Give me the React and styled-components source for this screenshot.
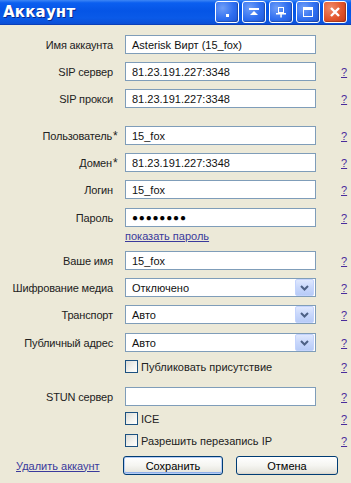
import React from 'react';
import styled, { createGlobalStyle } from 'styled-components';

const GlobalStyle = createGlobalStyle`
  html, body {
    margin: 0;
    padding: 0;
    background: #ece9d8;
  }
  body {
    font-family: Tahoma, "Liberation Sans", "DejaVu Sans", sans-serif;
    font-size: 11px;
    color: #222;
  }
`;

const Window = styled.div`
  width: 351px;
  height: 483px;
  background: #ece9d8;
  overflow: hidden;
`;

const TitleBar = styled.div`
  height: 24px;
  display: flex;
  align-items: center;
  justify-content: space-between;
  padding: 0 4px 0 3px;
  background: linear-gradient(180deg, #3d86f5 0%, #0b5ff0 12%, #0555e6 45%, #0a5ae8 75%, #0b4fd6 100%);
  border-bottom: 1px solid #0b3fb8;
`;

const Title = styled.div`
  color: #fff;
  font-family: "DejaVu Sans", "Liberation Sans", sans-serif;
  font-weight: bold;
  font-size: 15px;
  letter-spacing: 0.2px;
  text-shadow: 1px 1px 0 #0a2a8c;
`;

const Controls = styled.div`
  display: flex;
  gap: 3px;
`;

const CtrlButton = styled.div`
  width: 22px;
  height: 20px;
  border: 1px solid #fff;
  border-radius: 3px;
  display: flex;
  align-items: center;
  justify-content: center;
  background: ${(p) =>
    p.$close
      ? 'radial-gradient(circle at 30% 30%, #f08a6a 0%, #e2552c 55%, #c8391a 100%)'
      : 'radial-gradient(circle at 30% 30%, #6f9ef8 0%, #2f6ef0 55%, #1f57d8 100%)'};
  box-shadow: inset -1px -1px 1px rgba(0, 0, 0, 0.25);
`;

const Form = styled.div`
  padding-top: 10px;
`;

const Row = styled.div`
  display: grid;
  grid-template-columns: 113px 191px 1fr;
  column-gap: 12px;
  align-items: center;
  height: ${(p) => p.$h || 19}px;
  margin-top: ${(p) => p.$mt || 0}px;
`;

const Label = styled.div`
  text-align: right;
  white-space: nowrap;
  letter-spacing: -0.15px;
`;

const Star = styled.span`
  display: inline-block;
  width: 0;
  overflow: visible;
  margin-left: 1px;
  font-size: 12px;
`;

const Input = styled.div`
  box-sizing: border-box;
  height: 19px;
  border: 1px solid #7f9db9;
  background: #fff;
  padding: 0 6px;
  display: flex;
  align-items: center;
  font-size: 11px;
  color: #111;
  white-space: nowrap;
`;

const Dots = styled.span`
  font-size: 10px;
  letter-spacing: 0.8px;
  color: #000;
`;

const SelectBox = styled(Input)`
  padding-right: 1px;
  justify-content: space-between;
`;

const DropBtn = styled.div`
  width: 17px;
  height: 15px;
  border: 1px solid #c3d3fd;
  border-radius: 2px;
  background: linear-gradient(180deg, #dfe8fe 0%, #c8d7fb 50%, #b7cbf7 100%);
  display: flex;
  align-items: center;
  justify-content: center;
`;

const Help = styled.a`
  padding-left: 13px;
  color: #4a2c9c;
  text-decoration: underline;
  font-size: 11px;
  cursor: pointer;
`;

const Link = styled.a`
  color: #3a3a9c;
  text-decoration: underline;
  font-size: 11px;
  cursor: pointer;
  white-space: nowrap;
`;

const CheckWrap = styled.label`
  display: flex;
  align-items: center;
  gap: 3px;
  white-space: nowrap;
`;

const Check = styled.span`
  box-sizing: border-box;
  width: 13px;
  height: 13px;
  border: 1px solid #1c5180;
  background: linear-gradient(135deg, #dcdcd7 0%, #f4f4f0 60%, #ffffff 100%);
`;

const Footer = styled.div`
  display: flex;
  align-items: center;
  height: 19px;
  margin-top: 9px;
  padding-left: 16px;
`;

const LinkCell = styled.div`
  width: 107px;
`;

const Button = styled.div`
  box-sizing: border-box;
  width: ${(p) => p.$w}px;
  height: 19px;
  margin-right: ${(p) => p.$mr || 0}px;
  border: 1px solid #003c74;
  border-radius: 3px;
  background: linear-gradient(180deg, #ffffff 0%, #f5f5f1 50%, #e6e5dd 90%, #d6d0c5 100%);
  box-shadow: ${(p) =>
    p.$default ? 'inset 0 0 0 1px #b6cdf4, inset 0 -1px 0 1px #8fb0ea' : 'none'};
  display: flex;
  align-items: center;
  justify-content: center;
  color: #000;
  font-size: 11px;
`;

const Chevron = () => (
  <svg width="9" height="6" viewBox="0 0 9 6">
    <path d="M1 1 L4.5 4.5 L8 1" fill="none" stroke="#4d6185" strokeWidth="2" />
  </svg>
);

const TextRow = ({ label, value, star, help = true, mt }) => (
  <Row $mt={mt}>
    <Label>
      {label}
      {star && <Star>*</Star>}
    </Label>
    <Input>{value}</Input>
    {help ? <Help>?</Help> : <span />}
  </Row>
);

const SelectRow = ({ label, value, mt }) => (
  <Row $mt={mt}>
    <Label>{label}</Label>
    <SelectBox>
      <span>{value}</span>
      <DropBtn>
        <Chevron />
      </DropBtn>
    </SelectBox>
    <Help>?</Help>
  </Row>
);

const CheckRow = ({ text, mt }) => (
  <Row $mt={mt} $h={13}>
    <span />
    <CheckWrap>
      <Check />
      {text}
    </CheckWrap>
    <Help>?</Help>
  </Row>
);

const App = () => {
  return (
    <Window>
      <GlobalStyle />
      <TitleBar>
        <Title>Аккаунт</Title>
        <Controls>
          <CtrlButton>
            <svg width="12" height="12" viewBox="0 0 12 12">
              <rect x="5" y="8" width="3" height="3" fill="#fff" />
            </svg>
          </CtrlButton>
          <CtrlButton>
            <svg width="12" height="12" viewBox="0 0 12 12">
              <rect x="1" y="2" width="10" height="2" fill="#fff" />
              <path d="M6 5 L10 9 L2 9 Z" fill="#fff" />
            </svg>
          </CtrlButton>
          <CtrlButton>
            <svg width="12" height="12" viewBox="0 0 12 12">
              <rect x="3.5" y="1.5" width="5" height="5" fill="none" stroke="#fff" />
              <rect x="1" y="7" width="10" height="1.5" fill="#fff" />
              <rect x="5.3" y="8" width="1.5" height="3.5" fill="#fff" />
            </svg>
          </CtrlButton>
          <CtrlButton>
            <svg width="12" height="12" viewBox="0 0 12 12">
              <rect x="1.5" y="1.5" width="9" height="9" fill="none" stroke="#fff" />
              <rect x="1" y="1" width="10" height="3" fill="#fff" />
            </svg>
          </CtrlButton>
          <CtrlButton $close>
            <svg width="12" height="12" viewBox="0 0 12 12">
              <path d="M2 2 L10 10 M10 2 L2 10" stroke="#fff" strokeWidth="2.4" />
            </svg>
          </CtrlButton>
        </Controls>
      </TitleBar>

      <Form>
        <TextRow label="Имя аккаунта" value="Asterisk Вирт (15_fox)" help={false} />
        <TextRow label="SIP сервер" value="81.23.191.227:3348" mt={8} />
        <TextRow label="SIP прокси" value="81.23.191.227:3348" mt={8} />

        <TextRow label="Пользователь" star value="15_fox" mt={18} />
        <TextRow label="Домен" star value="81.23.191.227:3348" mt={8} />
        <TextRow label="Логин" value="15_fox" mt={8} />
        <TextRow label="Пароль" value={<Dots>●●●●●●●●</Dots>} mt={9} />
        <Row $mt={2} $h={14}>
          <span />
          <Link>показать пароль</Link>
          <span />
        </Row>

        <TextRow label="Ваше имя" value="15_fox" mt={8} />
        <SelectRow label="Шифрование медиа" value="Отключено" mt={8} />
        <SelectRow label="Транспорт" value="Авто" mt={8} />
        <SelectRow label="Публичный адрес" value="Авто" mt={9} />
        <CheckRow text="Публиковать присутствие" mt={8} />

        <TextRow label="STUN сервер" value="" mt={14} />
        <CheckRow text="ICE" mt={6} />
        <CheckRow text="Разрешить перезапись IP" mt={9} />

        <Footer>
          <LinkCell>
            <Link>Удалить аккаунт</Link>
          </LinkCell>
          <Button $w={100} $mr={13} $default>
            Сохранить
          </Button>
          <Button $w={102}>Отмена</Button>
        </Footer>
      </Form>
    </Window>
  );
};

export default App;
